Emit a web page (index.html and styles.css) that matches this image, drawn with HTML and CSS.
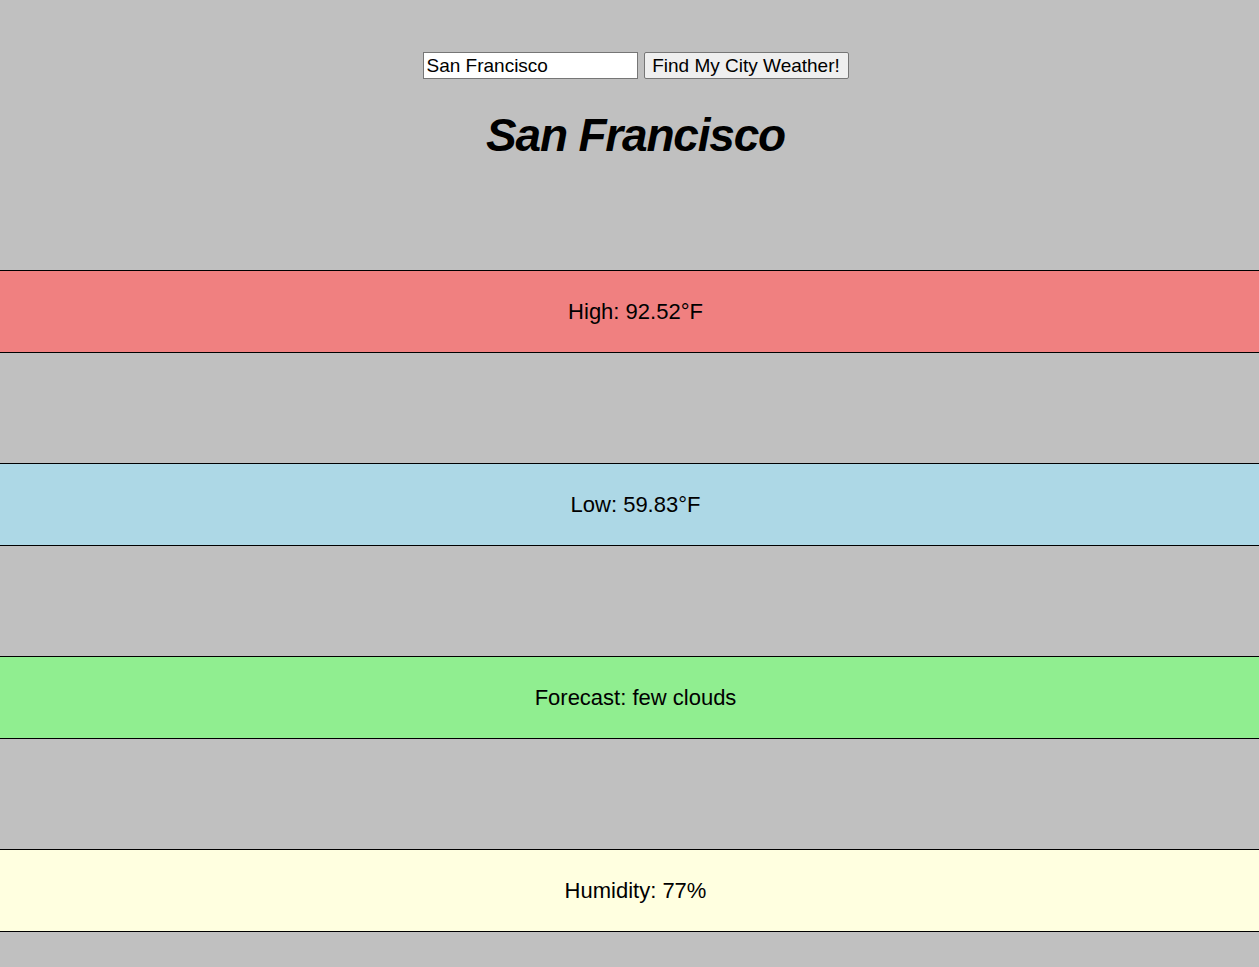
FILE: index.html
```html
<!DOCTYPE html>
<html lang="en">
<head>
<meta charset="utf-8">
<title>City Weather</title>
<link rel="stylesheet" href="styles.css">
</head>
<body>
<header class="header">
  <form class="search">
    <input class="search-input" type="text" value="San Francisco">
    <button class="search-btn" type="button">Find My City Weather!</button>
  </form>
  <h1 class="city">San Francisco</h1>
</header>
<main class="rows">
  <div class="row row-high"><span class="row-text">High: 92.52°F</span></div>
  <div class="row row-low"><span class="row-text">Low: 59.83°F</span></div>
  <div class="row row-forecast"><span class="row-text">Forecast: few clouds</span></div>
  <div class="row row-humidity"><span class="row-text">Humidity: 77%</span></div>
</main>
</body>
</html>
```
FILE: styles.css
```css
html, body {
  margin: 0;
  padding: 0;
}
body {
  background: #c0c0c0;
  font-family: "Liberation Sans", Arial, sans-serif;
  color: #000;
}
.header {
  height: 218px;
  padding-top: 52px;
  box-sizing: content-box;
  padding-left: 12px;
}
.search {
  display: flex;
  justify-content: center;
  align-items: center;
  gap: 6px;
  margin: 0;
}
.search-input {
  box-sizing: border-box;
  width: 215px;
  height: 27px;
  margin: 0;
  padding: 1px 3px;
  font-family: "Liberation Sans", Arial, sans-serif;
  font-size: 19px;
  color: #000;
  background: #fff;
  border: 1px solid #767676;
  border-radius: 0;
}
.search-btn {
  box-sizing: border-box;
  width: 205px;
  height: 27px;
  margin: 0;
  padding: 0 6px;
  font-family: "Liberation Sans", Arial, sans-serif;
  font-size: 19px;
  color: #000;
  background: #efefef;
  border: 1px solid #767676;
  border-radius: 2px;
}
.city {
  margin: 28px 0 0;
  text-align: center;
  font-size: 46px;
  letter-spacing: -1.2px;
  line-height: 56px;
  font-style: italic;
  font-weight: bold;
}
.rows {
  display: flex;
  flex-direction: column;
  gap: 110px;
  padding-bottom: 35px;
}
.row {
  height: 81px;
  border-top: 1px solid #000;
  border-bottom: 1px solid #000;
  display: flex;
  align-items: center;
  justify-content: center;
  padding-left: 12px;
  font-size: 22px;
}
.row-high { background: #f08080; }
.row-low { background: #add8e6; }
.row-forecast { background: #90ee90; }
.row-humidity { background: #ffffe0; }
```
